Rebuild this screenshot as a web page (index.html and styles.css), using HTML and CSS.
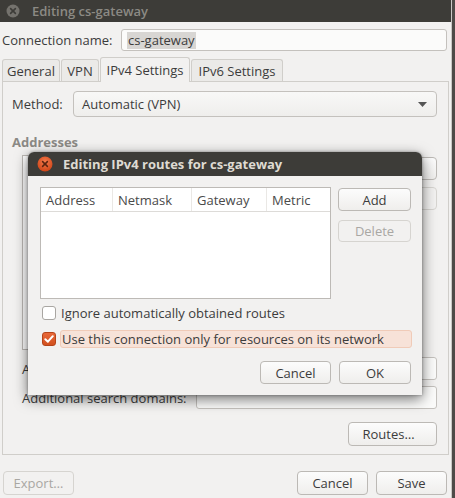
FILE: index.html
```html
<!DOCTYPE html>
<html>
<head>
<meta charset="utf-8">
<link rel="stylesheet" href="styles.css">
</head>
<body>
<div class="win">
  <div class="titlebar">
    <svg class="wclose" width="14" height="14" viewBox="0 0 14 14"><circle cx="7" cy="7" r="6.5" fill="#74726d"/><path d="M4.6 4.6L9.4 9.4M9.4 4.6L4.6 9.4" stroke="#3d3c38" stroke-width="1.6" stroke-linecap="round"/></svg>
    <span class="title">Editing cs-gateway</span>
  </div>
  <div class="wbody">
    <div class="namerow">
      <span class="namelbl">Connection name:</span>
      <div class="entry nameentry"><span class="sel">cs-gateway</span></div>
    </div>
    <div class="tabs">
      <div class="tab">General</div>
      <div class="tab">VPN</div>
      <div class="tab active">IPv4 Settings</div>
      <div class="tab">IPv6 Settings</div>
    </div>
    <div class="panel">
      <div class="method">
        <span class="methodlbl">Method:</span>
        <div class="combo"><span>Automatic (VPN)</span><svg width="9" height="5" viewBox="0 0 9 5"><path d="M0 0H9L4.5 5Z" fill="#555"/></svg></div>
      </div>
      <div class="section">Addresses</div>
      <div class="addr">
        <div class="list"></div>
        <div class="btncol">
          <div class="btn"></div>
          <div class="btn dis"></div>
        </div>
      </div>
      <div class="form">
        <span class="flbl">Additional DNS servers:</span><div class="entry fentry"></div>
        <span class="flbl">Additional search domains:</span><div class="entry fentry"></div>
      </div>
      <div class="routes"><div class="btn routesbtn">Routes…</div></div>
    </div>
    <div class="footer">
      <div class="btn dis fbtn">Export…</div>
      <div class="spacer"></div>
      <div class="btn fbtn">Cancel</div>
      <div class="btn fbtn">Save</div>
    </div>
  </div>
</div>

<div class="dialog">
  <div class="dtitlebar">
    <svg class="dclose" width="16" height="16" viewBox="0 0 16 16"><defs><radialGradient id="og" cx="50%" cy="35%" r="65%"><stop offset="0" stop-color="#f47a4c"/><stop offset="1" stop-color="#cf4517"/></radialGradient></defs><circle cx="8" cy="8" r="7.5" fill="url(#og)"/><path d="M5.6 5.6L10.4 10.4M10.4 5.6L5.6 10.4" stroke="#5a2410" stroke-width="1.5" stroke-linecap="round"/></svg>
    <span class="dtitle">Editing IPv4 routes for cs-gateway</span>
  </div>
  <div class="dbody">
    <div class="drow">
      <div class="tree">
        <div class="thead">
          <div class="th c1">Address</div>
          <div class="th c2">Netmask</div>
          <div class="th c3">Gateway</div>
          <div class="th c4">Metric</div>
        </div>
      </div>
      <div class="dbtncol">
        <div class="btn dbtn">Add</div>
        <div class="btn dbtn dis">Delete</div>
      </div>
    </div>
    <div class="check c-one">
      <span class="box"></span>
      <span class="clabel">Ignore automatically obtained routes</span>
    </div>
    <div class="check c-two">
      <span class="box on"><svg width="12" height="12" viewBox="0 0 12 12"><path d="M2.3 6.2L4.9 8.7L9.8 3.2" fill="none" stroke="#fff" stroke-width="2" stroke-linecap="round" stroke-linejoin="round"/></svg></span>
      <span class="clabel hl">Use this connection only for resources on its network</span>
    </div>
    <div class="dfoot">
      <div class="btn dfbtn">Cancel</div>
      <div class="btn dfbtn">OK</div>
    </div>
  </div>
</div>
</body>
</html>
```

FILE: styles.css
```css
* { box-sizing: border-box; }
html, body { margin: 0; padding: 0; }
body {
  width: 455px;
  height: 498px;
  overflow: hidden;
  position: relative;
  background: #4e4b48;
  font-family: "Open Sans", "DejaVu Sans", sans-serif;
  font-size: 13px;
  color: #3c3c3c;
}

.win {
  width: 452px;
  height: 498px;
  background: #f2f1f0;
  border-right: 1px solid #c9c7c4;
  display: flex;
  flex-direction: column;
}
.titlebar {
  flex: none;
  height: 22px;
  background: #3d3c38;
  display: flex;
  align-items: center;
  padding-left: 6px;
  gap: 12px;
}
.title { color: #8c8a84; font-weight: 600; font-size: 13px; }

.wbody {
  padding: 7px 2px 0 2px;
  display: flex;
  flex-direction: column;
}
.namerow { display: flex; align-items: center; height: 22px; }
.namelbl { width: 119px; flex: none; }
.entry {
  background: #fbfbfa;
  border: 1px solid #c4c1bd;
  border-radius: 3px;
}
.nameentry {
  flex: 1;
  height: 22px;
  margin-right: 2px;
  display: flex;
  align-items: center;
  padding-left: 5px;
}
.sel { background: #d8d6d3; padding: 0 1px; line-height: 17px; }

.tabs {
  display: flex;
  align-items: flex-end;
  margin-top: 6px;
  height: 24px;
  gap: 1px;
  position: relative;
  z-index: 1;
}
.tab {
  height: 22px;
  border: 1px solid #d0ceca;
  border-bottom: none;
  border-radius: 3px 3px 0 0;
  padding: 0;
  white-space: nowrap;
  display: flex;
  align-items: center;
  justify-content: center;
  background: #ebeae8;
}
.tab:nth-child(1) { width: 58px; }
.tab:nth-child(2) { width: 38px; }
.tab:nth-child(3) { width: 90px; }
.tab:nth-child(4) { width: 92px; }
.tab.active {
  height: 25px;
  margin-bottom: -1px;
  background: #f2f1f0;
}

.panel {
  height: 374px;
  border: 1px solid #d0ceca;
  padding: 9px 11px 0 9px;
  display: flex;
  flex-direction: column;
}
.method { display: flex; align-items: center; height: 26px; }
.methodlbl { width: 61px; flex: none; }
.combo {
  flex: 1;
  height: 26px;
  border: 1px solid #c4c1bd;
  border-radius: 4px;
  background: linear-gradient(#f8f8f7, #efeeec);
  display: flex;
  align-items: center;
  justify-content: space-between;
  padding: 0 9px 0 8px;
}
.section {
  margin-top: 16px;
  height: 18px;
  line-height: 18px;
  font-weight: 700;
  color: #8b8985;
}
.addr {
  margin-top: 4px;
  margin-left: 10px;
  display: flex;
  gap: 8px;
  height: 195px;
}
.list { flex: 1; border: 1px solid #bdbab6; background: #fff; }
.btncol { width: 73px; display: flex; flex-direction: column; gap: 7px; padding-top: 2px; }
.btncol .btn { height: 23px; }

.form {
  margin-top: 7px;
  margin-left: 10px;
  display: grid;
  grid-template-columns: 174px 1fr;
  row-gap: 6px;
  align-items: center;
}
.flbl { white-space: nowrap; }
.fentry { height: 23px; }
.routes { display: flex; justify-content: flex-end; margin-top: 13px; }
.routesbtn { width: 89px; height: 24px; justify-content: flex-end; padding-right: 8px; }

.btn {
  display: flex;
  align-items: center;
  justify-content: center;
  border: 1px solid #bcb9b5;
  border-radius: 4px;
  background: linear-gradient(#fcfcfc, #efeeec);
  color: #3c3c3c;
}
.btn.dis { color: #a9a7a3; border-color: #d6d4d0; background: #f2f1f0; }

.footer { display: flex; margin-top: 16px; gap: 8px; padding-left: 1px; padding-right: 2px; }
.fbtn { width: 71px; height: 24px; }
.spacer { flex: 1; }

/* dialog window on top */
.dialog {
  position: absolute;
  left: 28px;
  top: 152px;
  width: 394px;
  height: 243px;
  background: #f2f1f0;
  border-radius: 6px 6px 0 0;
  box-shadow: 0 4px 14px rgba(0, 0, 0, 0.55), 0 0 3px rgba(0, 0, 0, 0.35);
  display: flex;
  flex-direction: column;
}
.dtitlebar {
  height: 24px;
  flex: none;
  background: #3d3c38;
  border-radius: 6px 6px 0 0;
  display: flex;
  align-items: center;
  padding-left: 9px;
  gap: 10px;
}
.dtitle { color: #dfdbd2; font-weight: 700; font-size: 13px; }
.dbody { padding: 11px 10px 0 12px; display: flex; flex-direction: column; }
.drow { display: flex; gap: 7px; height: 112px; }
.tree { width: 291px; border: 1px solid #bdbab6; background: #fff; }
.thead { display: flex; height: 24px; border-bottom: 1px solid #dddbd8; }
.th { padding-left: 5px; display: flex; align-items: center; color: #4a4a4a; border-right: 1px solid #eae8e5; }
.th.c1 { width: 72px; }
.th.c2 { width: 79px; }
.th.c3 { width: 75px; }
.th.c4 { flex: 1; border-right: none; }
.dbtncol { width: 73px; display: flex; flex-direction: column; gap: 9px; padding-top: 1px; }
.dbtn { height: 23px; }
.dbtn.dis { height: 22px; }

.check { display: flex; align-items: center; gap: 5px; padding-left: 2px; }
.c-one { margin-top: 6px; height: 16px; }
.c-two { margin-top: 9px; height: 18px; gap: 4px; }
.box {
  width: 14px;
  height: 14px;
  border: 1px solid #a9a6a2;
  border-radius: 3px;
  background: #fff;
  flex: none;
  display: flex;
  align-items: center;
  justify-content: center;
}
.box.on { background: linear-gradient(#e8693a, #d2511f); border-color: #b5441a; }
.clabel.hl {
  flex: 1;
  height: 18px;
  display: flex;
  align-items: center;
  padding-left: 1px;
  background: #f7e2d8;
  border: 1px solid #f0cbb8;
  border-radius: 3px;
}
.dfoot { display: flex; justify-content: flex-end; gap: 8px; margin-top: 13px; padding-right: 1px; }
.dfbtn { width: 71px; height: 23px; }
.dfbtn:last-child { width: 72px; }
```
